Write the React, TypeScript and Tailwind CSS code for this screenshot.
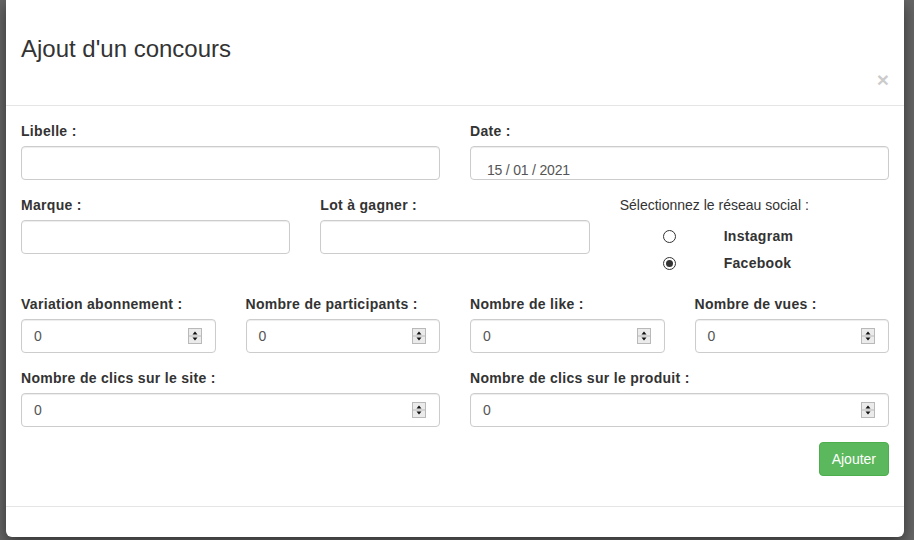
import React from "react";

const Spinner = () => (
  <svg width="14" height="16" viewBox="0 0 14 16" className="shrink-0">
    <rect x="0.5" y="0.5" width="13" height="15" fill="#ebebeb" stroke="#b9b9b9" />
    <line x1="0" y1="8" x2="14" y2="8" stroke="#b9b9b9" />
    <path d="M7 3.5 L9.5 6.5 H4.5 Z" fill="#111" />
    <path d="M4.5 9.5 H9.5 L7 12.5 Z" fill="#111" />
  </svg>
);

const Label = ({ children }: { children: React.ReactNode }) => (
  <label className="mb-[5px] block text-[14px] font-bold leading-[20px] tracking-[0.3px] text-[#333]">{children}</label>
);

const TextField = () => (
  <div className="h-[34px] w-full rounded-[4px] border border-[#ccc] bg-white shadow-[inset_0_1px_1px_rgba(0,0,0,0.075)]" />
);

const NumberField = () => (
  <div className="flex h-[34px] w-full items-center justify-between rounded-[4px] border border-[#ccc] bg-white pl-[12px] pr-[13px] shadow-[inset_0_1px_1px_rgba(0,0,0,0.075)]">
    <span className="text-[14px] leading-[20px] text-[#555]">0</span>
    <Spinner />
  </div>
);

const Group = ({ label, children }: { label: string; children: React.ReactNode }) => (
  <div className="mb-[15px]">
    <Label>{label}</Label>
    {children}
  </div>
);

const Radio = ({ checked }: { checked?: boolean }) => (
  <span className="flex h-[13px] w-[13px] shrink-0 items-center justify-center rounded-full border border-[#333] bg-white">
    {checked && <span className="h-[7px] w-[7px] rounded-full bg-[#333]" />}
  </span>
);

export default function App() {
  return (
    <div
      className="h-[540px] w-[914px] overflow-hidden bg-[#666]"
      style={{ fontFamily: '"Liberation Sans", Arial, Helvetica, sans-serif' }}
    >
      <div className="ml-[6px] w-[898px] rounded-b-[6px] bg-white shadow-[0_5px_15px_rgba(0,0,0,0.5)]">
        {/* header */}
        <div className="border-b border-[#e5e5e5] px-[15px] pb-[15px] pt-[36px]">
          <h4 className="text-[24px] font-normal leading-[26px] text-[#333]">Ajout d'un concours</h4>
          <div className="mt-[7px] flex justify-end">
            <span className="text-[21px] font-bold leading-[21px] text-[#000] opacity-20">×</span>
          </div>
        </div>

        {/* body */}
        <div className="p-[15px]">
          <div className="grid grid-cols-2 gap-x-[30px]">
            <Group label="Libelle :">
              <TextField />
            </Group>
            <Group label="Date :">
              <div className="h-[34px] w-full rounded-[4px] border border-[#ccc] bg-white pl-[16px] pt-[13px] shadow-[inset_0_1px_1px_rgba(0,0,0,0.075)]">
                <span className="block text-[14px] leading-[20px] tracking-[-0.2px] text-[#555]">15 / 01 / 2021</span>
              </div>
            </Group>
          </div>

          <div className="grid grid-cols-3 items-start gap-x-[30px]">
            <Group label="Marque :">
              <TextField />
            </Group>
            <Group label="Lot à gagner :">
              <TextField />
            </Group>
            <div className="pb-[17px]">
              <div className="text-[14px] leading-[20px] text-[#333]">Sélectionnez le réseau social :</div>
              <div className="mt-[8px] flex flex-col">
                <div className="flex h-[27px] items-center">
                  <span className="ml-[43px]">
                    <Radio />
                  </span>
                  <span className="ml-[48px] text-[14px] font-bold tracking-[0.3px] text-[#333]">Instagram</span>
                </div>
                <div className="flex h-[27px] items-center">
                  <span className="ml-[43px]">
                    <Radio checked />
                  </span>
                  <span className="ml-[48px] text-[14px] font-bold tracking-[0.3px] text-[#333]">Facebook</span>
                </div>
              </div>
            </div>
          </div>

          <div className="grid grid-cols-4 gap-x-[30px]">
            <Group label="Variation abonnement :">
              <NumberField />
            </Group>
            <Group label="Nombre de participants :">
              <NumberField />
            </Group>
            <Group label="Nombre de like :">
              <NumberField />
            </Group>
            <Group label="Nombre de vues :">
              <NumberField />
            </Group>
          </div>

          <div className="grid grid-cols-2 gap-x-[30px]">
            <Group label="Nombre de clics sur le site :">
              <NumberField />
            </Group>
            <Group label="Nombre de clics sur le produit :">
              <NumberField />
            </Group>
          </div>

          <div className="mb-[15px] flex justify-end">
            <button className="h-[34px] rounded-[4px] border border-[#4cae4c] bg-[#5cb85c] px-[12px] text-[14px] leading-[20px] text-white">
              Ajouter
            </button>
          </div>
        </div>

        {/* footer */}
        <div className="border-t border-[#e5e5e5] p-[15px]" />
      </div>
    </div>
  );
}
